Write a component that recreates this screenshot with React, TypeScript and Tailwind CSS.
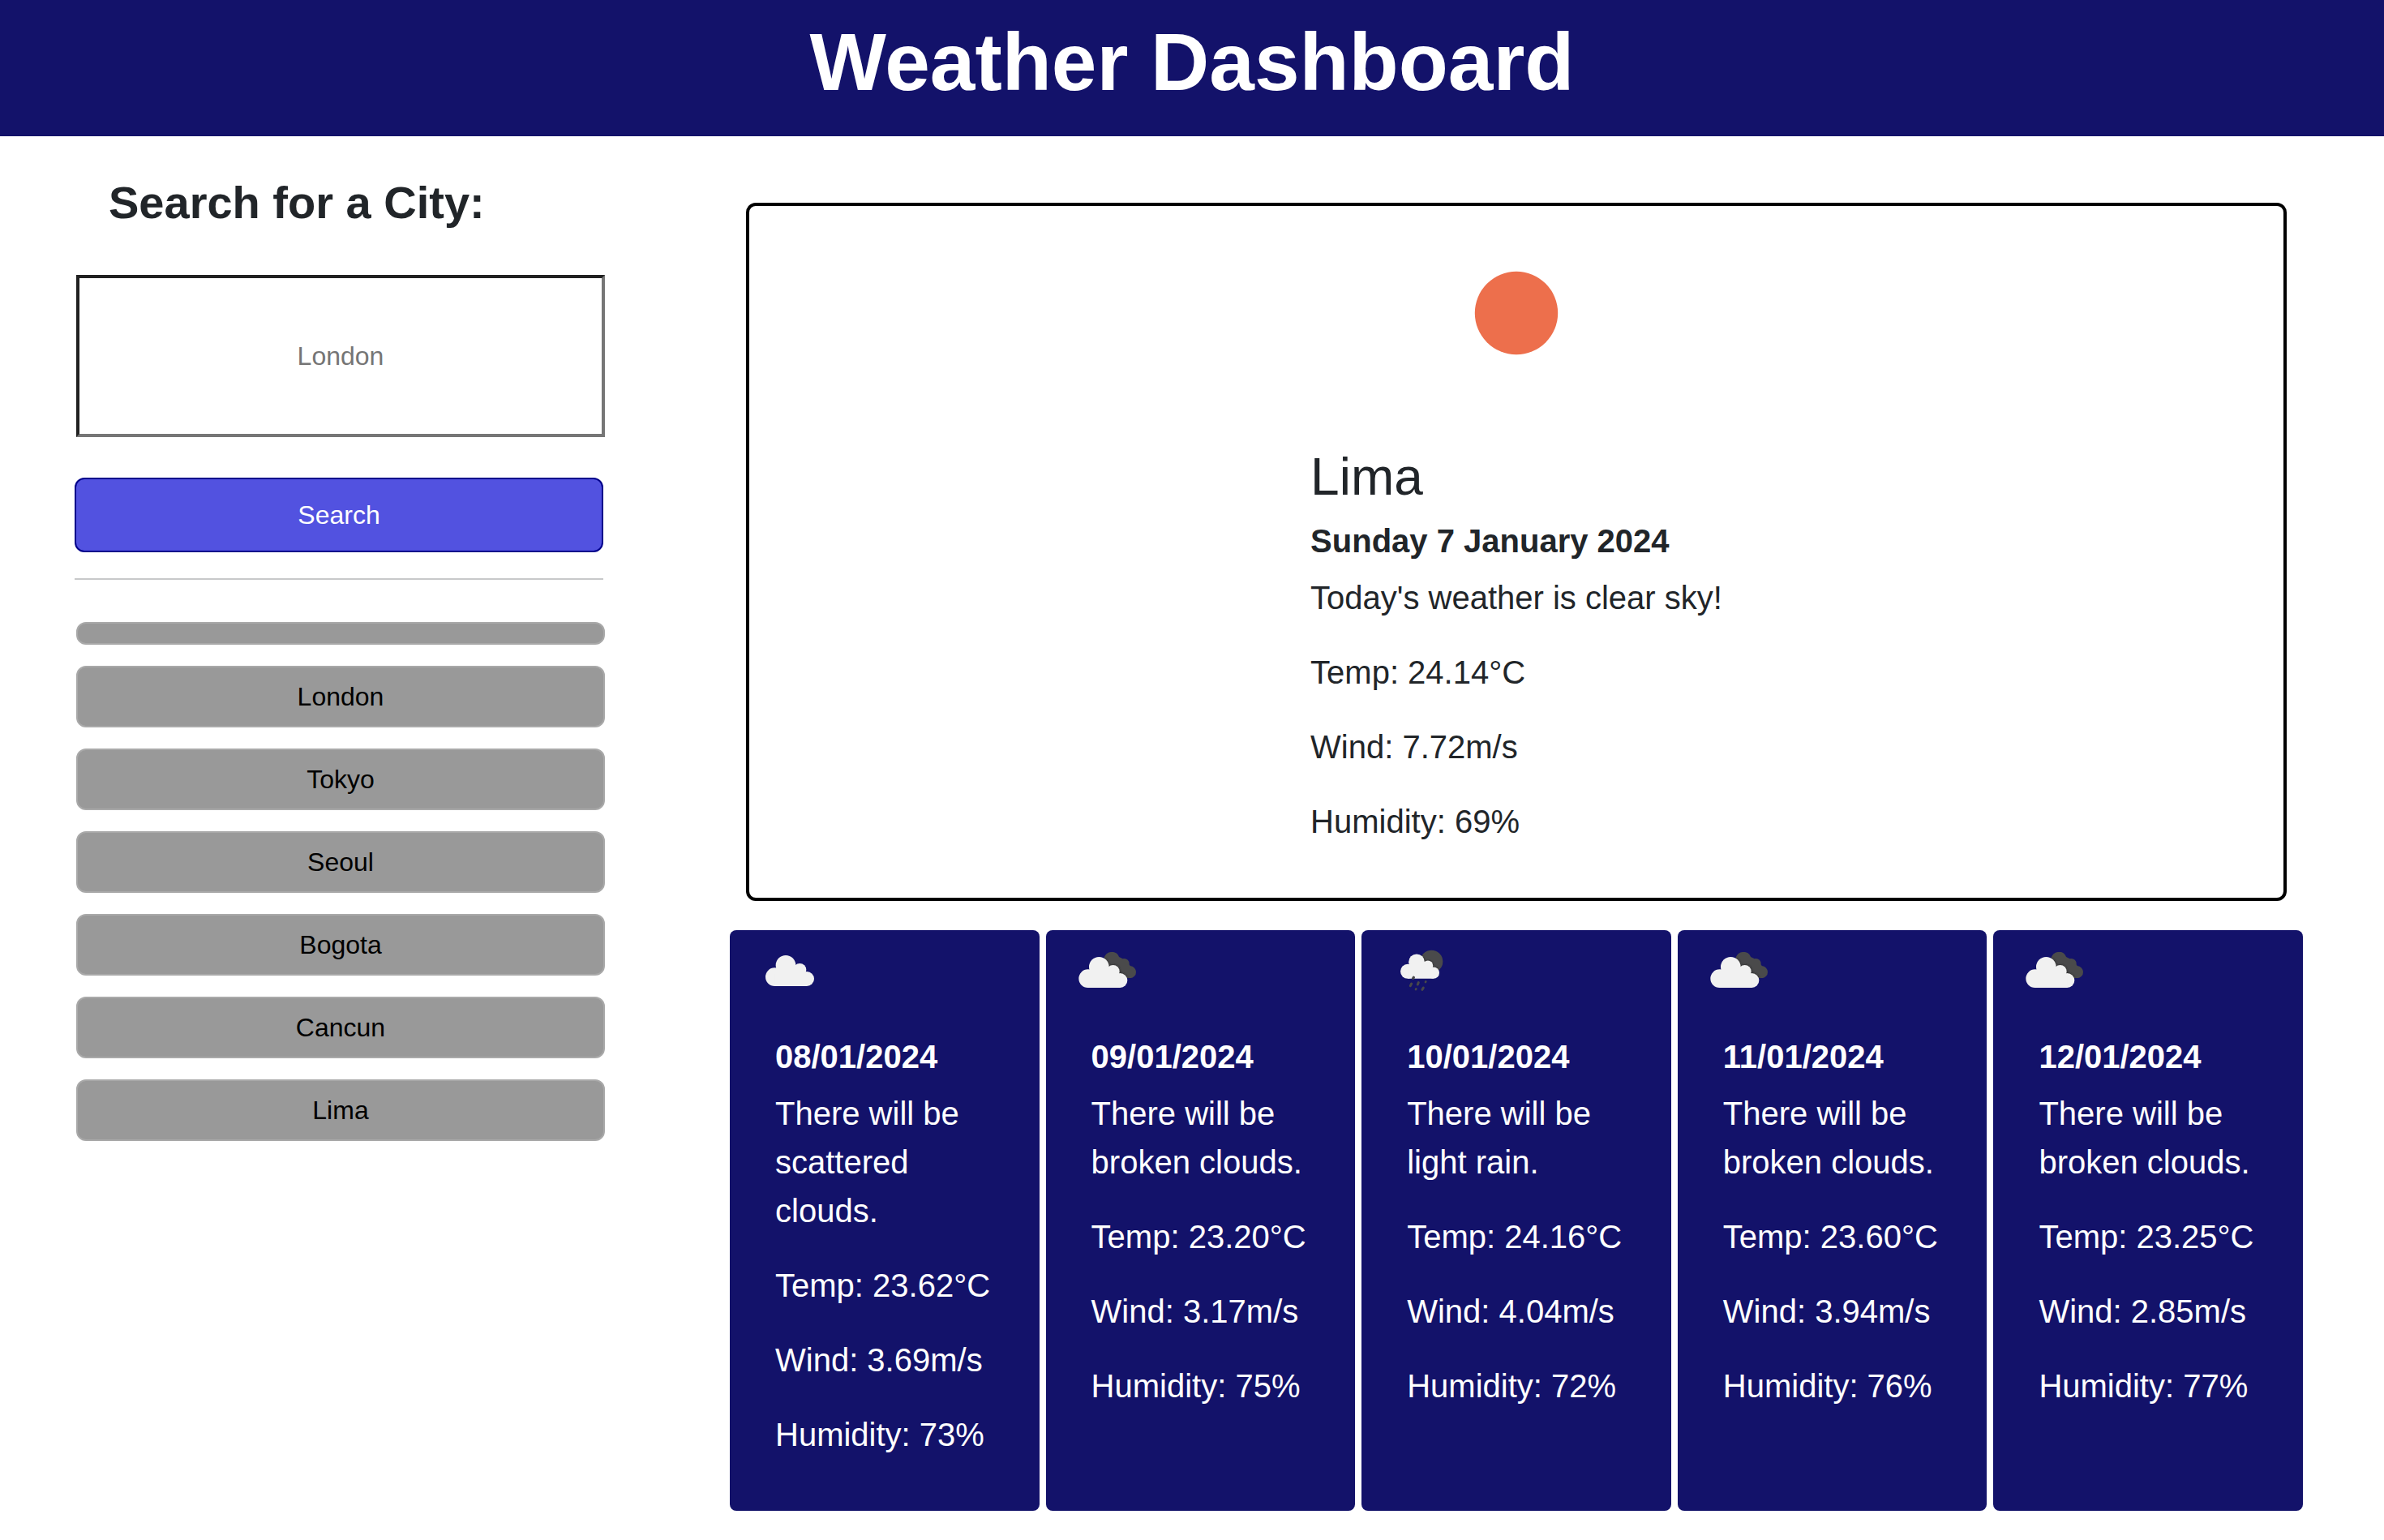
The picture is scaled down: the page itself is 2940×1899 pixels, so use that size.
import type { ReactNode } from "react";

function CloudShape() {
  return (
    <>
      <circle cx="94" cy="173" r="34" />
      <circle cx="135" cy="130" r="37" />
      <circle cx="187" cy="147" r="24" />
      <circle cx="213" cy="180" r="27" />
      <path d="M94 207 L94 150 L125 120 L187 140 L213 160 L213 207 Z" />
    </>
  );
}

function SunIcon() {
  return (
    <svg viewBox="0 0 100 100" className="size-[200px]" aria-hidden="true">
      <circle cx="50" cy="50" r="25.6" fill="#ed6f4c" />
    </svg>
  );
}

function IconFrame({ children }: { children: ReactNode }) {
  return (
    <svg viewBox="0 0 300 300" className="ml-6 size-[100px]" aria-hidden="true">
      <defs>
        <filter id="cloud-shadow" x="-20%" y="-20%" width="140%" height="140%">
          <feGaussianBlur stdDeviation="4" />
        </filter>
        <clipPath id="back-cloud">
          <circle cx="171" cy="109" r="29" />
          <circle cx="217" cy="124" r="19" />
          <circle cx="238" cy="155" r="23" />
          <path d="M150 120 L190 95 L225 112 L245 140 L240 178 L190 178 Z" />
        </clipPath>
        <clipPath id="back-moon">
          <circle cx="187" cy="116" r="42" />
        </clipPath>
      </defs>
      {children}
    </svg>
  );
}

function ScatteredIcon() {
  return (
    <IconFrame>
      <g fill="#f1f1f1">
        <CloudShape />
      </g>
    </IconFrame>
  );
}

function BrokenIcon() {
  return (
    <IconFrame>
      <g clipPath="url(#back-cloud)">
        <rect width="300" height="300" fill="#4a4a4b" />
        <g transform="translate(-11 6)" fill="#222" filter="url(#cloud-shadow)">
          <CloudShape />
        </g>
      </g>
      <g transform="translate(-11 6)" fill="#f1f1f1">
        <CloudShape />
      </g>
    </IconFrame>
  );
}

function RainIcon() {
  return (
    <IconFrame>
      <g clipPath="url(#back-moon)">
        <rect width="300" height="300" fill="#4a4a4b" />
        <g transform="translate(24 14) scale(0.8)" fill="#222" filter="url(#cloud-shadow)">
          <CloudShape />
        </g>
      </g>
      <g transform="translate(24 14) scale(0.8)" fill="#f1f1f1">
        <CloudShape />
      </g>
      <g stroke="#48484a" strokeLinecap="round">
        <path d="M121 175 L119 178" strokeWidth="10" />
        <path d="M113 198 L109 206" strokeWidth="9" />
        <path d="M139 194 L136 201" strokeWidth="9" />
        <path d="M166 190 L165 192" strokeWidth="8" />
        <path d="M130 217 L129 219" strokeWidth="8" />
        <path d="M157 213 L153 220" strokeWidth="9" />
      </g>
    </IconFrame>
  );
}

const history = ["", "London", "Tokyo", "Seoul", "Bogota", "Cancun", "Lima"];

const forecast = [
  { date: "08/01/2024", sky: "scattered clouds", temp: "23.62", wind: "3.69", humidity: 73, Icon: ScatteredIcon },
  { date: "09/01/2024", sky: "broken clouds", temp: "23.20", wind: "3.17", humidity: 75, Icon: BrokenIcon },
  { date: "10/01/2024", sky: "light rain", temp: "24.16", wind: "4.04", humidity: 72, Icon: RainIcon },
  { date: "11/01/2024", sky: "broken clouds", temp: "23.60", wind: "3.94", humidity: 76, Icon: BrokenIcon },
  { date: "12/01/2024", sky: "broken clouds", temp: "23.25", wind: "2.85", humidity: 77, Icon: BrokenIcon },
];

export default function App() {
  return (
    <div className="min-h-screen bg-white font-['Liberation_Sans',Arial,sans-serif] text-[40px] leading-[60px] text-[#212529]">
      <header className="bg-[#13126a] pt-4 pb-8 text-center">
        <h1 className="text-[100px] leading-[120px] font-bold text-white">Weather Dashboard</h1>
      </header>

      <div className="grid grid-cols-[654fr_1940fr] gap-[154px] pr-[100px] pl-[92px]">
        <aside className="pt-12">
          <form onSubmit={(event) => event.preventDefault()}>
            <h2 className="ml-[42px] text-[56px] leading-[67px] font-bold">
              <label htmlFor="city">Search for a City:</label>
            </h2>
            <div className="mt-14 ml-0.5">
              <input
                id="city"
                type="text"
                placeholder="London"
                className="block h-[200px] w-full border-4 border-t-[#212121] border-r-[#767676] border-b-[#767676] border-l-[#212121] text-center text-[32px] placeholder:text-[#757575]"
              />
            </div>
            <div className="mt-[50px] mr-0.5">
              <button
                type="submit"
                className="block h-[92px] w-full rounded-xl border-2 border-[#00008b] bg-[#5252e0] text-[32px] leading-9 text-white"
              >
                Search
              </button>
            </div>
          </form>
          <hr className="mt-8 mr-0.5 border-t-2 border-[#c8c9ca]" />
          <div className="mt-[52px] ml-0.5 flex flex-col gap-[26px]">
            {history.map((city) => (
              <button
                key={city}
                type="button"
                aria-label={city || "Empty search"}
                className="rounded-xl border-2 border-[#a9a9a9] bg-[#999999] py-3 text-[32px] text-black"
              >
                {city && <span className="block leading-12">{city}</span>}
              </button>
            ))}
          </div>
        </aside>

        <main className="pt-[82px]">
          <section className="mx-5 flex flex-col items-center rounded-xl border-4 border-black pt-8 pb-16">
            <SunIcon />
            <div className="mt-16">
              <h2 className="text-[64px] leading-[77px]">Lima</h2>
              <h3 className="mt-4 leading-12 font-bold">Sunday 7 January 2024</h3>
              <div className="mt-4 flex flex-col gap-8">
                <p>Today's weather is clear sky!</p>
                <p>Temp: 24.14°C</p>
                <p>Wind: 7.72m/s</p>
                <p>Humidity: 69%</p>
              </div>
            </div>
          </section>

          <section className="mt-9 grid grid-cols-5 gap-2 text-white">
            {forecast.map(({ date, sky, temp, wind, humidity, Icon }) => (
              <article key={date} className="rounded-lg bg-[#13126a] pb-16">
                <Icon />
                <div className="mt-8 px-14">
                  <h3 className="leading-12 font-bold">{date}</h3>
                  <div className="mt-4 flex flex-col gap-8">
                    <p>{`There will be ${sky}.`}</p>
                    <p className="whitespace-nowrap">{`Temp: ${temp}°C`}</p>
                    <p className="whitespace-nowrap">{`Wind: ${wind}m/s`}</p>
                    <p className="whitespace-nowrap">{`Humidity: ${humidity}%`}</p>
                  </div>
                </div>
              </article>
            ))}
          </section>
        </main>
      </div>
    </div>
  );
}
